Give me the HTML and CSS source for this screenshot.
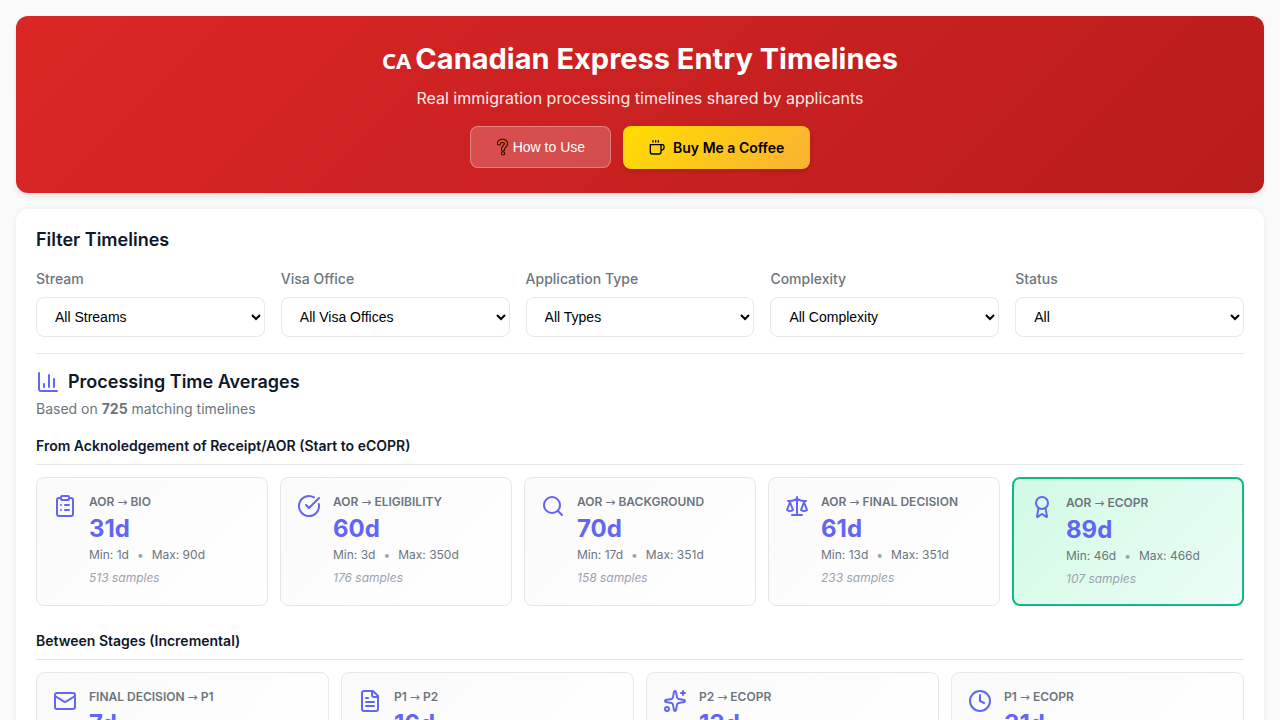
FILE: index.html
```html
<!DOCTYPE html>
<html lang="en">
<head>
<meta charset="utf-8">
<meta name="viewport" content="width=device-width, initial-scale=1">
<title>Canadian Express Entry Timelines</title>
<link rel="stylesheet" href="styles.css">
</head>
<body>
<header class="hero">
  <h1 class="hero-title"><span class="country">CA</span>Canadian Express Entry Timelines</h1>
  <p class="hero-subtitle">Real immigration processing timelines shared by applicants</p>
  <div class="hero-actions">
    <button class="btn btn-help" type="button">
      <svg class="icon-question" viewBox="0 0 13 18"><g stroke="#2a0a05" stroke-width="4.200"><path d="M3 5.500C3.200 2 10 1.800 10 5.500C10 8.500 7 8 7 11.500"/><path d="M7 15.300v.1"/></g><g stroke="#f0501f" stroke-width="2"><path d="M3 5.500C3.200 2 10 1.800 10 5.500C10 8.500 7 8 7 11.500"/><path d="M7 15.300v.1"/></g></svg>
      How to Use
    </button>
    <a class="btn btn-coffee" href="#coffee">
      <svg class="icon-small" viewBox="0 0 24 24"><path d="M18 7h2a2.500 2.500 0 0 1 2.500 2.500v2A3.500 3.500 0 0 1 19 15h-1M2 7h16v11a3 3 0 0 1-3 3H5a3 3 0 0 1-3-3zM6 1v2M10 1v2M14 1v2"/></svg>
      Buy Me a Coffee
    </a>
  </div>
</header>
<main class="panel">
  <section class="filters">
    <h2 class="section-title">Filter Timelines</h2>
    <form class="filter-grid">
      <div class="field"><label for="stream">Stream</label><select id="stream"><option>All Streams</option></select></div>
      <div class="field"><label for="office">Visa Office</label><select id="office"><option>All Visa Offices</option></select></div>
      <div class="field"><label for="type">Application Type</label><select id="type"><option>All Types</option></select></div>
      <div class="field"><label for="complexity">Complexity</label><select id="complexity"><option>All Complexity</option></select></div>
      <div class="field"><label for="status">Status</label><select id="status"><option>All</option></select></div>
    </form>
  </section>
  <section class="averages">
    <h2 class="section-title with-icon">
      <svg class="icon" viewBox="0 0 24 24"><path d="M3 3v16a2 2 0 0 0 2 2h16M18 17V9M13 17V5M8 17v-3"/></svg>
      Processing Time Averages
    </h2>
    <p class="summary">Based on <strong>725</strong> matching timelines</p>

    <h3 class="group-title">From Acknoledgement of Receipt/AOR (Start to eCOPR)</h3>
    <div class="cards cards-five">
      <article class="card">
        <svg class="icon" viewBox="0 0 24 24"><rect width="8" height="4" x="8" y="2" rx="1"/><path d="M16 4h2a2 2 0 0 1 2 2v14a2 2 0 0 1-2 2H6a2 2 0 0 1-2-2V6a2 2 0 0 1 2-2h2M12 11h4M12 16h4M8 11h.01M8 16h.01"/></svg>
        <div class="card-body"><h4 class="card-label">AOR <span class="arrow">→</span> BIO</h4><p class="card-value">31d</p><p class="card-range"><span>Min: 1d</span><span class="dot">•</span><span>Max: 90d</span></p><p class="card-samples">513 samples</p></div>
      </article>
      <article class="card">
        <svg class="icon" viewBox="0 0 24 24"><path d="M21.801 10A10 10 0 1 1 17 3.335M9 11l3 3L22 4"/></svg>
        <div class="card-body"><h4 class="card-label">AOR <span class="arrow">→</span> Eligibility</h4><p class="card-value">60d</p><p class="card-range"><span>Min: 3d</span><span class="dot">•</span><span>Max: 350d</span></p><p class="card-samples">176 samples</p></div>
      </article>
      <article class="card">
        <svg class="icon" viewBox="0 0 24 24"><circle cx="11" cy="11" r="8"/><path d="m21 21-4.300-4.300"/></svg>
        <div class="card-body"><h4 class="card-label">AOR <span class="arrow">→</span> Background</h4><p class="card-value">70d</p><p class="card-range"><span>Min: 17d</span><span class="dot">•</span><span>Max: 351d</span></p><p class="card-samples">158 samples</p></div>
      </article>
      <article class="card">
        <svg class="icon" viewBox="0 0 24 24"><path d="m16 16 3-8 3 8c-.87.65-1.920 1-3 1s-2.130-.35-3-1ZM2 16l3-8 3 8c-.87.65-1.920 1-3 1s-2.130-.35-3-1ZM7 21h10M12 3v18M3 7h2c2 0 5-1 7-2 2 1 5 2 7 2h2"/></svg>
        <div class="card-body"><h4 class="card-label">AOR <span class="arrow">→</span> Final Decision</h4><p class="card-value">61d</p><p class="card-range"><span>Min: 13d</span><span class="dot">•</span><span>Max: 351d</span></p><p class="card-samples">233 samples</p></div>
      </article>
      <article class="card card-highlight">
        <svg class="icon" viewBox="0 0 24 24"><path d="m15.477 12.890 1.515 8.526a.5.5 0 0 1-.81.470l-3.580-2.687a1 1 0 0 0-1.197 0l-3.586 2.686a.5.5 0 0 1-.81-.469l1.514-8.526"/><circle cx="12" cy="8" r="6"/></svg>
        <div class="card-body"><h4 class="card-label">AOR <span class="arrow">→</span> eCOPR</h4><p class="card-value">89d</p><p class="card-range"><span>Min: 46d</span><span class="dot">•</span><span>Max: 466d</span></p><p class="card-samples">107 samples</p></div>
      </article>
    </div>

    <h3 class="group-title">Between Stages (Incremental)</h3>
    <div class="cards cards-four">
      <article class="card">
        <svg class="icon" viewBox="0 0 24 24"><rect width="20" height="16" x="2" y="4" rx="2"/><path d="m22 7-8.970 5.700a1.940 1.940 0 0 1-2.060 0L2 7"/></svg>
        <div class="card-body"><h4 class="card-label">Final Decision <span class="arrow">→</span> P1</h4><p class="card-value">7d</p></div>
      </article>
      <article class="card">
        <svg class="icon" viewBox="0 0 24 24"><path d="M15 2H6a2 2 0 0 0-2 2v16a2 2 0 0 0 2 2h12a2 2 0 0 0 2-2V7ZM14 2v4a2 2 0 0 0 2 2h4M10 9H8M16 13H8M16 17H8"/></svg>
        <div class="card-body"><h4 class="card-label">P1 <span class="arrow">→</span> P2</h4><p class="card-value">16d</p></div>
      </article>
      <article class="card">
        <svg class="icon" viewBox="0 0 24 24"><path d="M11.017 2.814a1 1 0 0 1 1.966 0l1.051 5.558a2 2 0 0 0 1.594 1.594l5.558 1.051a1 1 0 0 1 0 1.966l-5.558 1.051a2 2 0 0 0-1.594 1.594l-1.051 5.558a1 1 0 0 1-1.966 0l-1.051-5.558a2 2 0 0 0-1.594-1.594l-5.558-1.051a1 1 0 0 1 0-1.966l5.558-1.051a2 2 0 0 0 1.594-1.594zM20 2v4M22 4h-4"/><circle cx="4" cy="20" r="2"/></svg>
        <div class="card-body"><h4 class="card-label">P2 <span class="arrow">→</span> eCOPR</h4><p class="card-value">13d</p></div>
      </article>
      <article class="card">
        <svg class="icon" viewBox="0 0 24 24"><circle cx="12" cy="12" r="10"/><path d="M12 6v6l4 2"/></svg>
        <div class="card-body"><h4 class="card-label">P1 <span class="arrow">→</span> eCOPR</h4><p class="card-value">31d</p></div>
      </article>
    </div>
  </section>
</main>
</body>
</html>
```
FILE: styles.css
```css
* { box-sizing: border-box; }
h1, h2, h3, h4, p { margin: 0; }
body {
  margin: 0;
  padding: 16px;
  background: #fafafa;
  color: #0f172a;
  font-family: Inter, "Liberation Sans", sans-serif;
  font-size: 16px;
  line-height: 24px;
}
svg {
  flex: none;
  fill: none;
  stroke: currentColor;
  stroke-width: 2;
  stroke-linecap: round;
  stroke-linejoin: round;
}
.icon { width: 24px; height: 24px; color: #6366f1; }
.icon-small { width: 16px; height: 16px; }
.icon-question { width: 13px; height: 18px; }

.hero {
  padding: 24px;
  margin-bottom: 16px;
  border-radius: 12px;
  background: linear-gradient(135deg, #dc2626 0%, #b91c1c 100%);
  box-shadow: 0 4px 6px -1px rgba(0, 0, 0, 0.1);
  color: #fff;
  text-align: center;
}
.hero-title {
  margin-bottom: 8px;
  font-size: 29px;
  font-weight: 700;
  line-height: 38px;
}
.country {
  margin-right: 4px;
  font-family: "Noto Sans", "Open Sans", sans-serif;
  font-size: 22px;
  line-height: 24px;
}
.hero-subtitle { margin-bottom: 16px; opacity: 0.9; }
.hero-actions {
  display: flex;
  justify-content: center;
  align-items: flex-start;
  gap: 12px;
}
.btn {
  display: flex;
  align-items: center;
  border-radius: 8px;
  font-size: 14px;
  text-decoration: none;
}
.btn-help {
  gap: 4px;
  padding: 8px 25px;
  border: 1px solid rgba(255, 255, 255, 0.3);
  background: rgba(255, 255, 255, 0.2);
  color: #fff;
  font-family: "Liberation Sans", Arial, sans-serif;
  font-weight: 500;
  line-height: 24px;
}
.btn-coffee {
  gap: 8px;
  padding: 10px 26px;
  background: linear-gradient(135deg, #ffdd00 0%, #fbb034 100%);
  box-shadow: 0 2px 4px rgba(0, 0, 0, 0.15);
  color: #000;
  font-weight: 600;
  line-height: 23px;
}

.panel {
  padding: 20px;
  border-radius: 12px;
  background: #fff;
  box-shadow: 0 1px 6px rgba(0, 0, 0, 0.08);
}
.section-title { font-size: 18px; font-weight: 600; line-height: 22px; }
.filters {
  padding-bottom: 16px;
  margin-bottom: 16px;
  border-bottom: 1px solid #e5e7eb;
}
.filter-grid {
  display: grid;
  grid-template-columns: repeat(5, 1fr);
  gap: 16px;
  margin-top: 16px;
}
.field { display: flex; flex-direction: column; gap: 6px; }
.field label {
  color: #6c757d;
  font-size: 14px;
  font-weight: 500;
  line-height: 24px;
}
.field select {
  width: 100%;
  height: 40px;
  padding: 0 0 0 14px;
  border: 1px solid #e5e7eb;
  border-radius: 8px;
  background: #fff;
  color: #000;
  font-family: "Liberation Sans", Arial, sans-serif;
  font-size: 14px;
}
.with-icon { display: flex; align-items: center; gap: 8px; }
.summary {
  margin-top: 4px;
  margin-bottom: 16px;
  color: #6c757d;
  font-size: 14px;
  line-height: 22px;
}
.group-title {
  padding-bottom: 8px;
  margin-bottom: 12px;
  border-bottom: 1px solid #e5e7eb;
  font-size: 14px;
  font-weight: 600;
  line-height: 20px;
}
.cards { display: grid; gap: 12px; margin-bottom: 25px; }
.cards-five { grid-template-columns: repeat(5, 1fr); }
.cards-four { grid-template-columns: repeat(4, 1fr); }
.card {
  display: flex;
  align-items: flex-start;
  gap: 12px;
  padding: 16px;
  border: 1px solid #e5e7eb;
  border-radius: 8px;
  background: linear-gradient(135deg, #fafafa 0%, #ffffff 100%);
}
.card-highlight {
  border: 2px solid #10b981;
  background: linear-gradient(135deg, #d1fae5 0%, #ecfdf5 100%);
}
.card-label {
  color: #6c757d;
  font-size: 12px;
  font-weight: 600;
  line-height: 16px;
  text-transform: uppercase;
}
.arrow {
  font-family: "DejaVu Sans", sans-serif;
  font-size: 12px;
  font-weight: 400;
  line-height: 12px;
}
.card-value {
  margin-top: 4px;
  margin-bottom: 2px;
  color: #6366f1;
  font-size: 24px;
  font-weight: 700;
  line-height: 30px;
}
.card-range {
  display: flex;
  gap: 8px;
  margin-bottom: 4px;
  color: #6c757d;
  font-size: 12px;
  line-height: 18px;
}
.dot { color: #9ca3af; }
.card-samples {
  color: #9ca3af;
  font-size: 12px;
  font-style: italic;
  line-height: 19px;
}
```
